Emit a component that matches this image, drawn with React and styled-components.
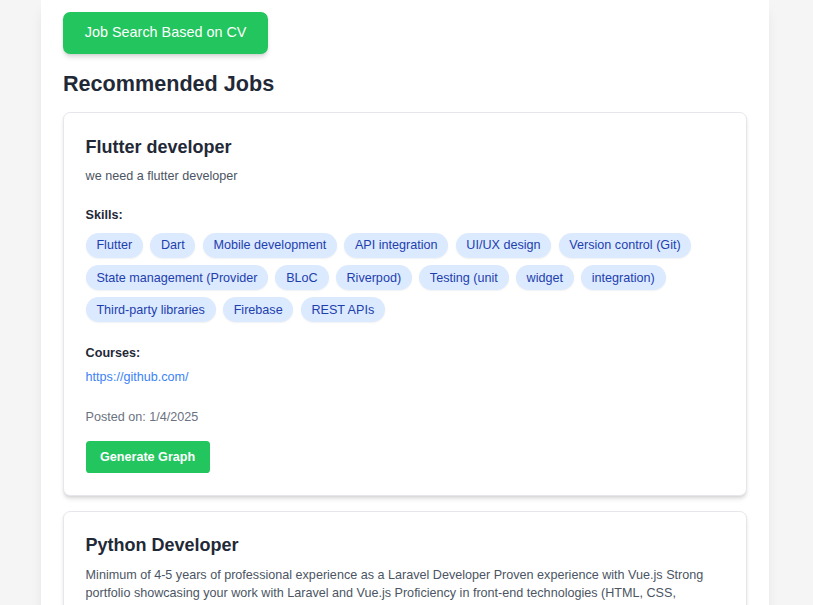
import React from 'react'
import styled, { createGlobalStyle } from 'styled-components'

const GlobalStyle = createGlobalStyle`
  html, body {
    margin: 0;
    padding: 0;
    background: #f5f5f5;
    font-family: "Liberation Sans", Arial, Helvetica, sans-serif;
  }
  * { box-sizing: border-box; }
`

const Page = styled.div`
  padding-left: 41px;
  min-height: 100vh;
`

const Panel = styled.main`
  width: 728px;
  background: #ffffff;
  padding: 12px 21.6px 21.6px 22px;
  box-shadow: 0 9px 13.5px -2.7px rgba(0, 0, 0, 0.1), 0 3.6px 5.4px -3.6px rgba(0, 0, 0, 0.1);
  min-height: 100vh;
`

const SearchButton = styled.button`
  display: inline-block;
  background: #22c55e;
  color: #ffffff;
  border: none;
  border-radius: 7.2px;
  padding: 10.4px 21.8px;
  font-family: inherit;
  font-size: 14.4px;
  line-height: 21.6px;
  box-shadow: 0 3.6px 5.4px -1px rgba(0, 0, 0, 0.15), 0 1.8px 3.6px -1.8px rgba(0, 0, 0, 0.1);
  cursor: pointer;
`

const Heading = styled.h2`
  margin: 16px 0 13.2px;
  font-size: 21.6px;
  line-height: 28.8px;
  font-weight: 700;
  color: #1f2937;
`

const JobList = styled.div`
  display: flex;
  flex-direction: column;
  gap: 15px;
`

const Card = styled.article`
  border: 1px solid #e5e7eb;
  border-radius: 7.2px;
  padding: 21.6px;
  background: #ffffff;
  box-shadow: 0 3.6px 5.4px -1px rgba(0, 0, 0, 0.1), 0 1.8px 3.6px -1.8px rgba(0, 0, 0, 0.1);
`

const Title = styled.h3`
  margin: 0 0 7.2px;
  font-size: 18px;
  line-height: 25.2px;
  font-weight: 700;
  color: #1f2937;
`

const Description = styled.p`
  margin: 0 0 20.8px;
  font-size: 12.6px;
  line-height: 18px;
  color: #4b5563;
`

const Label = styled.h4`
  margin: 0 0 ${({ $gap }) => $gap}px;
  font-size: 12.6px;
  line-height: 18px;
  font-weight: 700;
  color: #1f2937;
`

const Section = styled.section`
  margin-bottom: ${({ $gap }) => $gap}px;
`

const Tags = styled.div`
  display: flex;
  flex-wrap: wrap;
  gap: 7.2px;
`

const Tag = styled.span`
  display: inline-block;
  background: #dbeafe;
  color: #1e40af;
  border-radius: 9999px;
  padding: 3.6px 10.8px;
  font-size: 12.6px;
  line-height: 18px;
  box-shadow: 0 1px 1.8px rgba(0, 0, 0, 0.06);
`

const CourseLink = styled.a`
  display: block;
  font-size: 12.6px;
  line-height: 18px;
  color: #3b82f6;
  text-decoration: none;
`

const Posted = styled.p`
  margin: 0 0 14.4px;
  font-size: 12.6px;
  line-height: 18px;
  color: #6b7280;
`

const GraphButton = styled.button`
  background: #22c55e;
  color: #ffffff;
  border: none;
  border-radius: 3.6px;
  padding: 7.2px 14.4px;
  font-family: inherit;
  font-size: 12.6px;
  line-height: 18px;
  font-weight: 700;
  cursor: pointer;
`

const jobs = [
  {
    title: 'Flutter developer',
    description: 'we need a flutter developer',
    skills: [
      'Flutter',
      'Dart',
      'Mobile development',
      'API integration',
      'UI/UX design',
      'Version control (Git)',
      'State management (Provider',
      'BLoC',
      'Riverpod)',
      'Testing (unit',
      'widget',
      'integration)',
      'Third-party libraries',
      'Firebase',
      'REST APIs',
    ],
    courses: ['https://github.com/'],
    posted: '1/4/2025',
  },
  {
    title: 'Python Developer',
    description:
      'Minimum of 4-5 years of professional experience as a Laravel Developer Proven experience with Vue.js Strong portfolio showcasing your work with Laravel and Vue.js Proficiency in front-end technologies (HTML, CSS, JavaScript) Experience with RESTful APIs and database design',
    skills: ['Python', 'Laravel', 'Vue.js', 'HTML', 'CSS', 'JavaScript'],
    courses: ['https://github.com/'],
    posted: '1/4/2025',
  },
]

const JobCard = ({ job }) => (
  <Card>
    <Title>{job.title}</Title>
    <Description>{job.description}</Description>
    <Section $gap={21.6}>
      <Label $gap={8.4}>Skills:</Label>
      <Tags>
        {job.skills.map((s) => (
          <Tag key={s}>{s}</Tag>
        ))}
      </Tags>
    </Section>
    <Section $gap={22}>
      <Label $gap={6.4}>Courses:</Label>
      {job.courses.map((c) => (
        <CourseLink key={c} href={c}>
          {c}
        </CourseLink>
      ))}
    </Section>
    <Posted>Posted on: {job.posted}</Posted>
    <GraphButton>Generate Graph</GraphButton>
  </Card>
)

const App = () => (
  <>
    <GlobalStyle />
    <Page>
      <Panel>
        <SearchButton>Job Search Based on CV</SearchButton>
        <Heading>Recommended Jobs</Heading>
        <JobList>
          {jobs.map((job) => (
            <JobCard key={job.title} job={job} />
          ))}
        </JobList>
      </Panel>
    </Page>
  </>
)

export default App
